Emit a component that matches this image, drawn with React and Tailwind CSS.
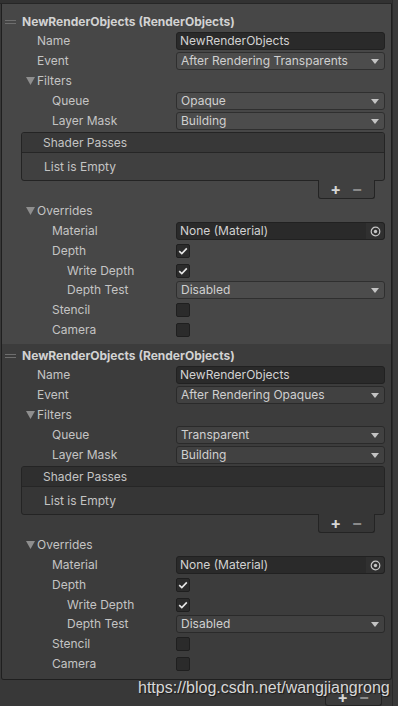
import React from "react";

const FONT = { fontFamily: "Inter, 'Noto Sans', sans-serif" };

function Arrow() {
  return (
    <svg width="8" height="5" viewBox="0 0 8 5" className="shrink-0">
      <path d="M0 0 H8 L4 5 Z" fill="#c4c4c4" />
    </svg>
  );
}

function Fold() {
  return (
    <svg width="9" height="8" viewBox="0 0 9 8" className="shrink-0">
      <path d="M0 0 H9 L4.5 8 Z" fill="#8e8e8e" />
    </svg>
  );
}

function Label({ indent, children }) {
  return (
    <div className="w-[174px] shrink-0 flex items-center" style={{ paddingLeft: indent }}>
      <span className="text-[12px] text-[#c4c4c4] leading-none">{children}</span>
    </div>
  );
}

function TextField({ value }) {
  return (
    <div className="w-[209px] h-[18px] rounded-[3px] bg-[#2a2a2a] border border-[#212121] flex items-center px-[3px]">
      <span className="text-[12px] text-[#d2d2d2] leading-none">{value}</span>
    </div>
  );
}

function Popup({ value, dark }) {
  return (
    <div
      className={
        "w-[209px] h-[18px] rounded-[3px] border flex items-center justify-between pl-[4px] pr-[5px] " +
        (dark ? "bg-[#414141] border-[#2a2a2a]" : "bg-[#4c4c4c] border-[#2f2f2f]")
      }
    >
      <span className="text-[12px] text-[#d0d0d0] leading-none">{value}</span>
      <Arrow />
    </div>
  );
}

function ObjectField() {
  return (
    <div className="w-[209px] h-[18px] rounded-[3px] bg-[#2a2a2a] border border-[#212121] flex items-center justify-between pl-[3px]">
      <span className="text-[12px] text-[#d2d2d2] leading-none">None (Material)</span>
      <div className="w-[18px] h-full bg-[#303030] rounded-r-[3px] flex items-center justify-center">
        <svg width="11" height="11" viewBox="0 0 11 11">
          <circle cx="5.5" cy="5.5" r="4.3" fill="none" stroke="#c4c4c4" strokeWidth="1.2" />
          <circle cx="5.5" cy="5.5" r="1.7" fill="#c4c4c4" />
        </svg>
      </div>
    </div>
  );
}

function Check({ on }) {
  return (
    <div className="w-[14px] h-[14px] rounded-[2px] bg-[#2b2b2b] border border-[#1f1f1f] flex items-center justify-center">
      {on && (
        <svg width="10" height="8" viewBox="0 0 10 8">
          <path d="M1.2 4.2 L3.8 6.6 L8.8 1.4" fill="none" stroke="#e6e6e6" strokeWidth="1.6" />
        </svg>
      )}
    </div>
  );
}

function Row({ indent, label, children, h = "h-[20px]" }) {
  return (
    <div className={h + " flex items-center"}>
      <Label indent={indent}>{label}</Label>
      {children}
    </div>
  );
}

function FoldRow({ label }) {
  return (
    <div className="h-[20px] flex items-center pl-[24px] gap-[2px]">
      <Fold />
      <span className="text-[12px] text-[#c4c4c4] leading-none">{label}</span>
    </div>
  );
}

function ShaderPasses({ dark }) {
  const bodyBg = dark ? "bg-[#363636]" : "bg-[#404040]";
  const headBg = dark ? "bg-[#2f2f2f]" : "bg-[#383838]";
  return (
    <div className="ml-[19px] w-[364px] mt-[1px] mb-[2px]">
      <div className={"rounded-[3px] border border-[#242424] overflow-hidden " + bodyBg}>
        <div className={"h-[20px] flex items-center pl-[21px] border-b border-[#262626] " + headBg}>
          <span className="text-[12px] text-[#c4c4c4] leading-none">Shader Passes</span>
        </div>
        <div className="h-[27px] flex items-center pl-[22px]">
          <span className="text-[12px] text-[#c4c4c4] leading-none">List is Empty</span>
        </div>
      </div>
      <div className="flex justify-end pr-[10px]">
        <div className={"w-[57px] h-[19px] -mt-[1px] border border-t-0 border-[#242424] rounded-b-[3px] flex items-center justify-around px-[6px] " + bodyBg}>
          <span className="text-[16px] leading-none text-[#d6d6d6] font-bold">+</span>
          <span className="text-[16px] leading-none text-[#8a8a8a] font-bold">−</span>
        </div>
      </div>
    </div>
  );
}

function Element({ bg, dark, event, queue, pt }) {
  return (
    <div className={bg + " " + pt + " pb-[4px]"}>
      <div className="h-[20px] flex items-center pl-[3px] pt-[2px]">
        <div className="w-[11px] flex flex-col gap-[2px] mr-[6px]">
          <div className="h-[1px] bg-[#6e6e6e]" />
          <div className="h-[1px] bg-[#6e6e6e]" />
        </div>
        <span className="text-[12px] font-bold text-[#d2d2d2] leading-none">
          NewRenderObjects (RenderObjects)
        </span>
      </div>
      <Row indent={35} label="Name">
        <TextField value="NewRenderObjects" />
      </Row>
      <Row indent={35} label="Event">
        <Popup value={event} dark={dark} />
      </Row>
      <FoldRow label="Filters" />
      <Row indent={50} label="Queue">
        <Popup value={queue} dark={dark} />
      </Row>
      <Row indent={50} label="Layer Mask">
        <Popup value="Building" dark={dark} />
      </Row>
      <ShaderPasses dark={dark} />
      <FoldRow label="Overrides" />
      <Row indent={50} label="Material">
        <ObjectField />
      </Row>
      <Row indent={50} label="Depth">
        <Check on />
      </Row>
      <Row indent={65} label="Write Depth" h="h-[19px]">
        <Check on />
      </Row>
      <Row indent={65} label="Depth Test">
        <Popup value="Disabled" dark={dark} />
      </Row>
      <Row indent={50} label="Stencil">
        <Check />
      </Row>
      <Row indent={50} label="Camera">
        <Check />
      </Row>
    </div>
  );
}

export default function App() {
  return (
    <div className="relative w-[398px] h-[706px] bg-[#383838] overflow-hidden flex" style={FONT}>
      <div className="w-[392px] flex flex-col">
        <div className="h-[4px] bg-[#323232] border-b border-[#262626]" />
        <div className="ml-[1px] w-[391px] border-x border-b border-[#1f1f1f] rounded-b-[3px] overflow-hidden">
          <Element bg="bg-[#474747]" event="After Rendering Transparents" queue="Opaque" pt="pt-[7px]" />
          <Element bg="bg-[#3c3c3c]" dark event="After Rendering Opaques" queue="Transparent" pt="pt-[1px]" />
          <div className="h-[2px] bg-[#3c3c3c]" />
        </div>
        <div className="flex justify-end pr-[10px] mt-[8px]">
          <div className="w-[57px] h-[18px] border border-t-0 border-[#242424] rounded-b-[3px] bg-[#3c3c3c] flex items-center justify-around px-[6px]">
            <span className="text-[16px] leading-none text-[#d6d6d6] font-bold">+</span>
            <span className="text-[16px] leading-none text-[#8a8a8a] font-bold">−</span>
          </div>
        </div>
      </div>
      <div className="w-[6px] bg-[#3a3a3a] border-l border-[#2a2a2a]" />
      <div
        className="absolute left-[138px] top-[680px] text-[16px] text-[#d8d8d8] leading-none"
        style={{ fontFamily: "'Liberation Sans', Arial, sans-serif", textShadow: "1px 1px 1px #1a1a1a" }}
      >
        https://blog.csdn.net/wangjiangrong
      </div>
    </div>
  );
}
